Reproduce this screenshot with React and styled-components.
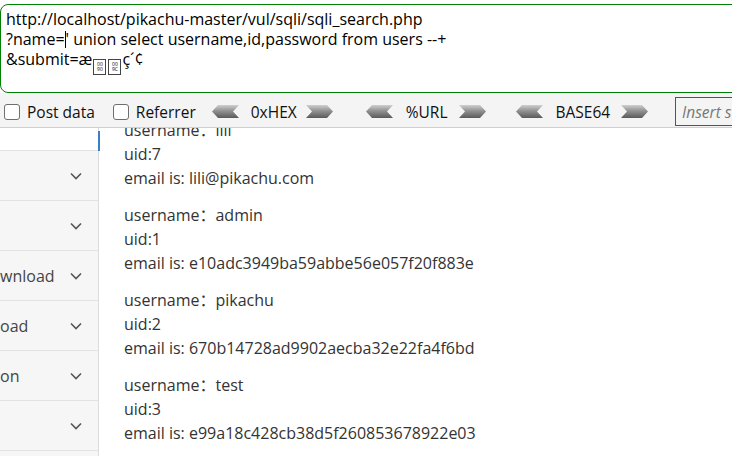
import React from "react";
import styled, { createGlobalStyle } from "styled-components";

const GlobalStyle = createGlobalStyle`
  html, body {
    margin: 0;
    padding: 0;
    background: #fff;
    overflow: hidden;
  }
  body {
    width: 732px;
    height: 456px;
    font-family: "Open Sans", "Noto Sans CJK SC", sans-serif;
  }
`;

const Page = styled.div`
  display: flex;
  flex-direction: column;
  width: 732px;
  height: 456px;
  overflow: hidden;
`;

const UrlBox = styled.div`
  margin-top: 4px;
  height: 89px;
  width: 760px;
  border: 1px solid #008000;
  border-radius: 8px;
  box-sizing: border-box;
  padding: 4px 0 0 5px;
  font-family: "Open Sans", sans-serif;
  font-size: 16px;
  line-height: 20px;
  color: #000;
  flex-shrink: 0;
`;

const UrlLine = styled.div`
  white-space: pre;
`;

const Caret = styled.span`
  display: inline-block;
  width: 1px;
  height: 17px;
  background: #000;
  vertical-align: -3px;
`;

const HexBox = styled.span`
  display: inline-flex;
  flex-direction: column;
  align-items: center;
  justify-content: center;
  width: 11px;
  height: 14px;
  border: 1px solid #444;
  margin: 0 1px;
  font-size: 5px;
  line-height: 5px;
  vertical-align: -1px;
`;

const Toolbar = styled.div`
  display: flex;
  align-items: center;
  box-sizing: border-box;
  height: 35px;
  padding: 3px 0 0 4px;
  background: #f4f4f4;
  border-bottom: 1px solid #cfcfcf;
  flex-shrink: 0;
  font-family: "Open Sans", sans-serif;
  font-size: 15.5px;
  color: #111;
`;

const Check = styled.label`
  display: flex;
  align-items: center;
  gap: 7px;
  margin-right: ${(p) => p.$gap}px;
`;

const Box = styled.span`
  width: 14px;
  height: 14px;
  border: 1px solid #6f6f6f;
  border-radius: 3px;
  background: #fff;
`;

const Codec = styled.div`
  display: flex;
  align-items: center;
  margin-right: ${(p) => p.$gap}px;
`;

const CodecName = styled.span`
  margin: 0 ${(p) => p.$right}px 0 ${(p) => p.$left}px;
`;

const Insert = styled.div`
  margin-left: auto;
  width: 57px;
  height: 29px;
  box-sizing: border-box;
  border: 1px solid #1e7a1e;
  border-right: none;
  padding-left: 6px;
  display: flex;
  align-items: center;
  font-style: italic;
  color: #777;
  white-space: nowrap;
  overflow: hidden;
`;

const Main = styled.div`
  flex: 1;
  display: flex;
  min-height: 0;
`;

const Sidebar = styled.nav`
  width: 98px;
  flex-shrink: 0;
  border-right: 1px solid #dcdcdc;
  background: #f6f6f6;
  display: flex;
  flex-direction: column;
  position: relative;
`;

const ActiveBar = styled.span`
  position: absolute;
  right: -2px;
  top: 3px;
  width: 2px;
  height: 20px;
  background: #3b7fc4;
`;

const NavTop = styled.div`
  height: 22px;
  background: #fff;
  border-bottom: 1px solid #e2e2e2;
  flex-shrink: 0;
`;

const NavItem = styled.div`
  height: 49px;
  flex-shrink: 0;
  border-bottom: 1px solid #e2e2e2;
  display: flex;
  align-items: center;
  justify-content: space-between;
  padding-right: 16px;
  font-size: 16px;
  color: #444;
`;

const Content = styled.div`
  flex: 1;
  overflow: hidden;
  padding-left: 25px;
  font-family: "Open Sans", "Noto Sans CJK SC", sans-serif;
  font-size: 16px;
  line-height: 24px;
  color: #333;
`;

const Results = styled.div`
  margin-top: -10px;
`;

const Result = styled.div`
  margin-bottom: 13px;
`;

const Arrow = ({ dir }) => (
  <svg width="27" height="13" viewBox="0 0 27 13">
    <defs>
      <linearGradient id={`g-${dir}`} x1="0" y1="0" x2="0" y2="1">
        <stop offset="0" stopColor="#cfcfcf" />
        <stop offset="0.45" stopColor="#929292" />
        <stop offset="1" stopColor="#5a5a5a" />
      </linearGradient>
    </defs>
    <polygon
      points={
        dir === "left"
          ? "0,6.5 6,0 27,0 21,6.5 27,13 6,13"
          : "0,0 21,0 27,6.5 21,13 0,13 6,6.5"
      }
      fill={`url(#g-${dir})`}
    />
  </svg>
);

const Chevron = () => (
  <svg width="12" height="8" viewBox="0 0 12 8">
    <path d="M1 1.5 L6 6.5 L11 1.5" fill="none" stroke="#555" strokeWidth="1.6" />
  </svg>
);

const codecs = [
  { name: "0xHEX", left: 12, right: 9, gap: 33 },
  { name: "%URL", left: 13, right: 11, gap: 30 },
  { name: "BASE64", left: 13, right: 11, gap: 0 },
];

const navItems = ["", "", "wnload", "oad", "on", "", ""];

const users = [
  { name: "lili", uid: 7, email: "lili@pikachu.com" },
  { name: "admin", uid: 1, email: "e10adc3949ba59abbe56e057f20f883e" },
  { name: "pikachu", uid: 2, email: "670b14728ad9902aecba32e22fa4f6bd" },
  { name: "test", uid: 3, email: "e99a18c428cb38d5f260853678922e03" },
];

const App = () => {
  return (
    <Page>
      <GlobalStyle />
      <UrlBox>
        <UrlLine>http://localhost/pikachu-master/vul/sqli/sqli_search.php</UrlLine>
        <UrlLine>
          ?name=<Caret />' union select username,id,password from users --+
        </UrlLine>
        <UrlLine>
          &amp;submit=æ
          <HexBox><span>00</span><span>90</span></HexBox>
          <HexBox><span>00</span><span>9C</span></HexBox>
          ç´¢
        </UrlLine>
      </UrlBox>
      <Toolbar>
        <Check $gap={18}>
          <Box />
          Post data
        </Check>
        <Check $gap={16}>
          <Box />
          Referrer
        </Check>
        {codecs.map((c) => (
          <Codec key={c.name} $gap={c.gap}>
            <Arrow dir="left" />
            <CodecName $left={c.left} $right={c.right}>{c.name}</CodecName>
            <Arrow dir="right" />
          </Codec>
        ))}
        <Insert>Insert string</Insert>
      </Toolbar>
      <Main>
        <Sidebar>
          <ActiveBar />
          <NavTop />
          {navItems.map((label, i) => (
            <NavItem key={i}>
              <span>{label}</span>
              <Chevron />
            </NavItem>
          ))}
        </Sidebar>
        <Content>
          <Results>
            {users.map((u) => (
              <Result key={u.uid}>
                <div>username：{u.name}</div>
                <div>uid:{u.uid}</div>
                <div>email is: {u.email}</div>
              </Result>
            ))}
          </Results>
        </Content>
      </Main>
    </Page>
  );
};

export default App;
